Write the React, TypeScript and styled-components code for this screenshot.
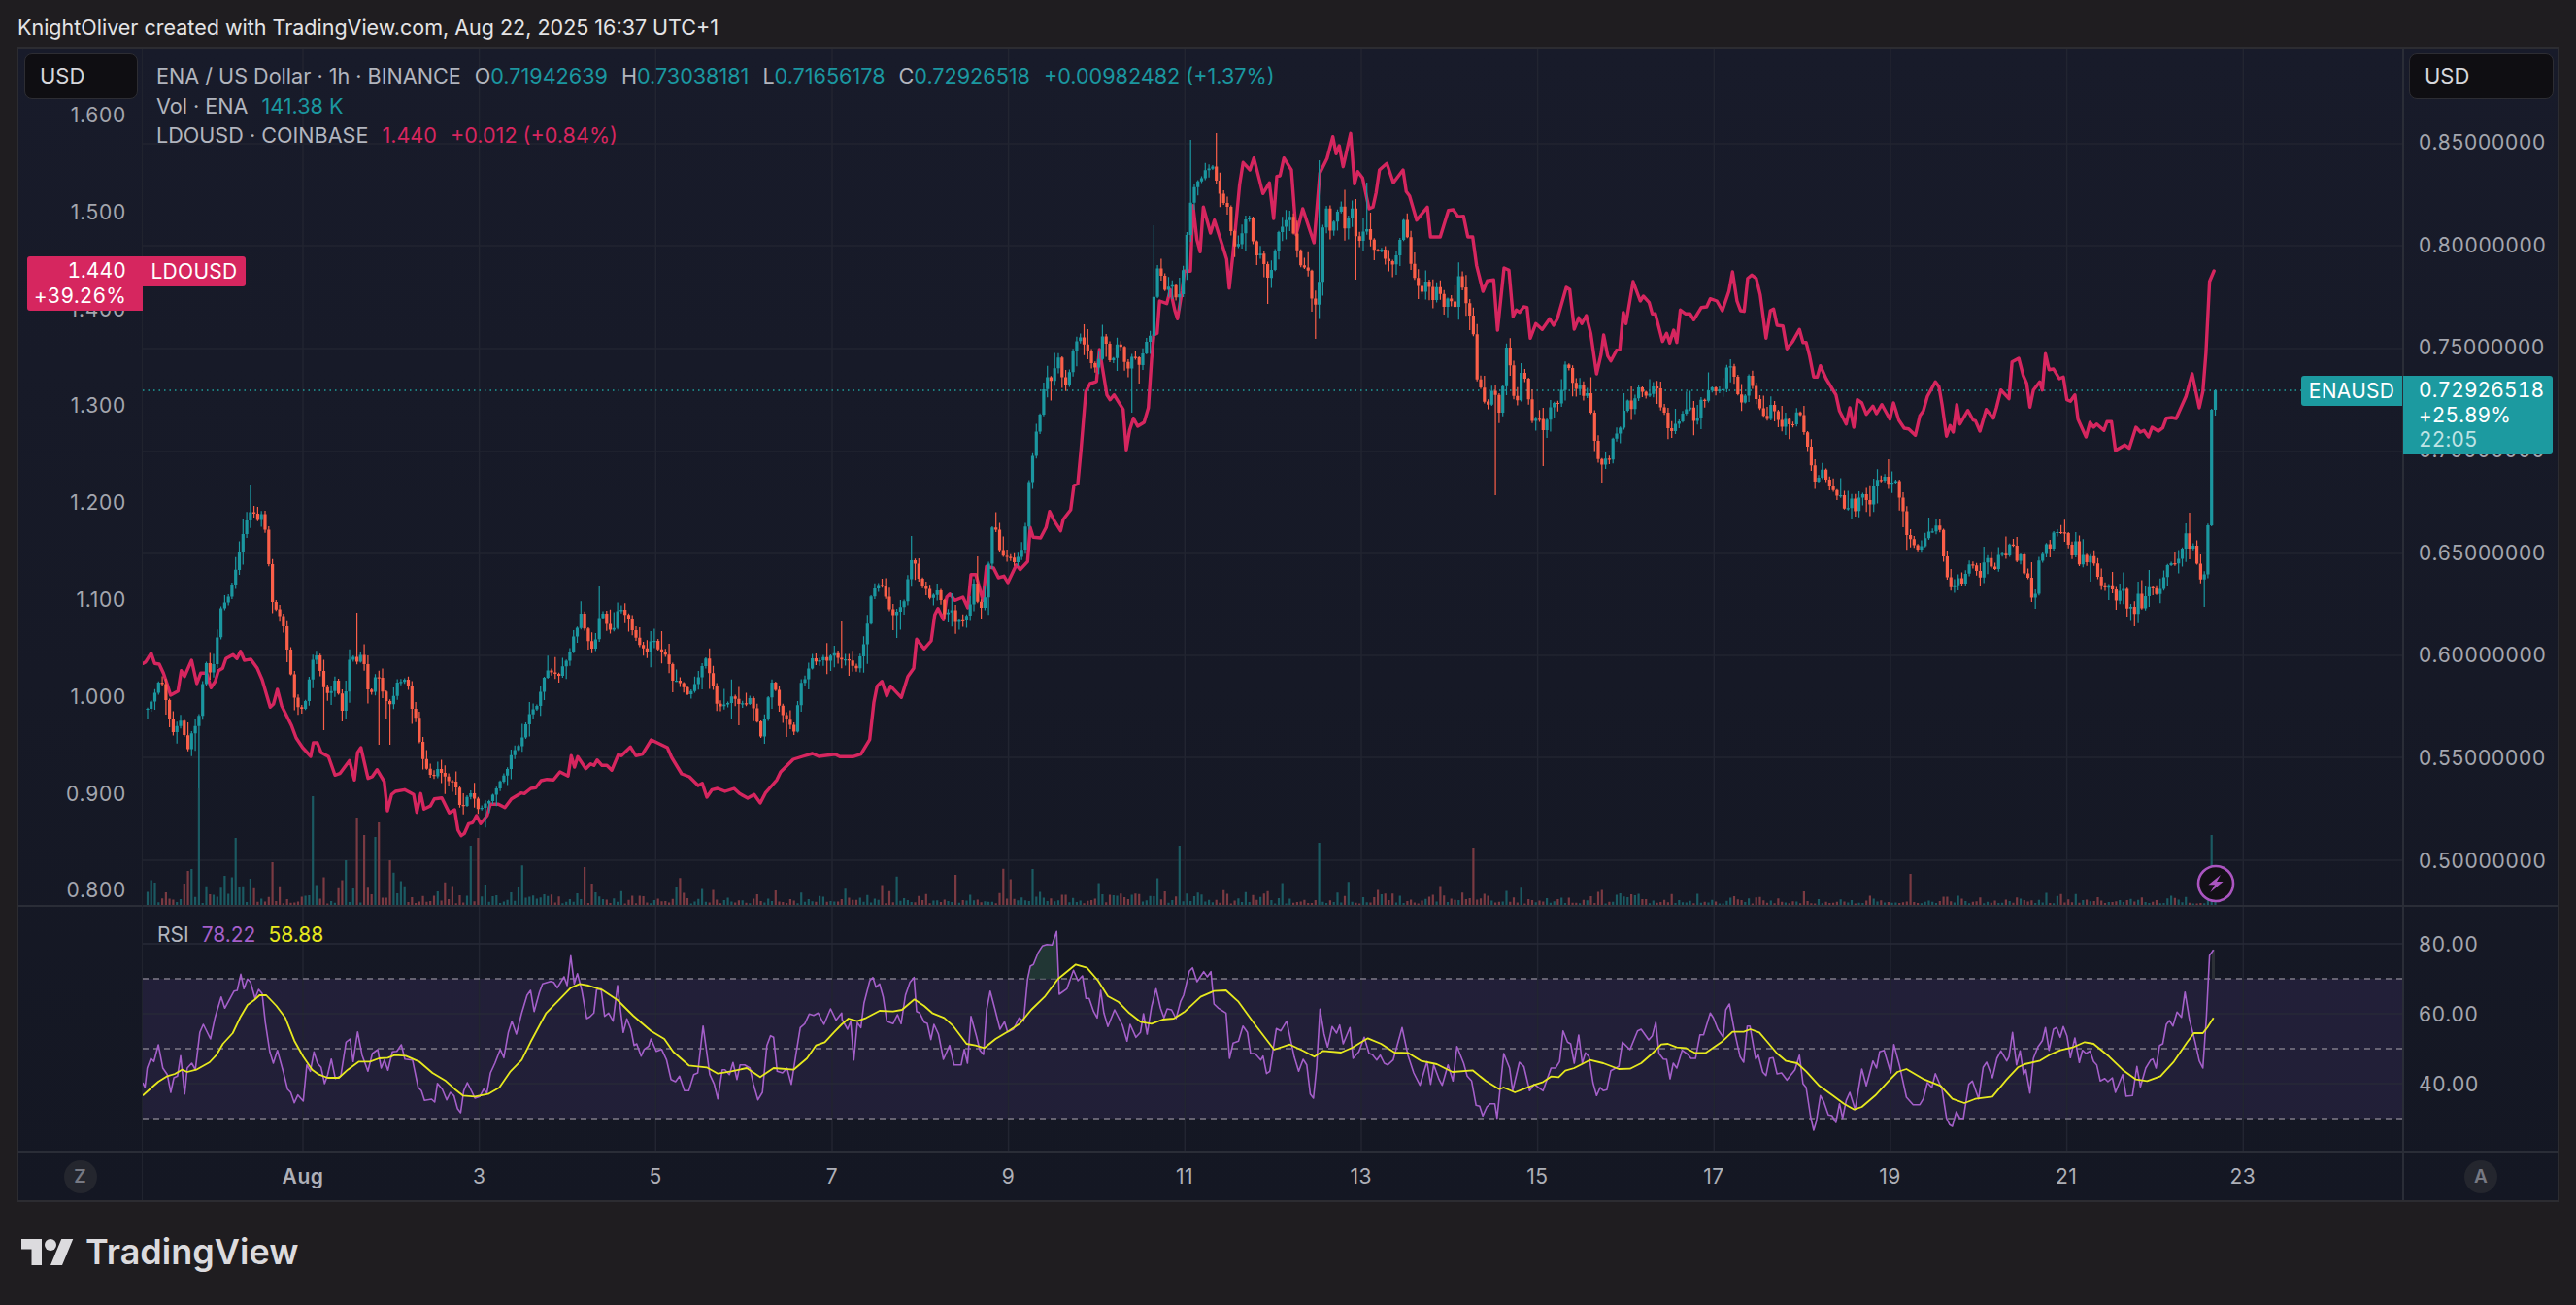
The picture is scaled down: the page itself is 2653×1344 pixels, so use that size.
import styled, { createGlobalStyle } from "styled-components";

const GlobalStyle = createGlobalStyle`
  html, body {
    margin: 0;
    padding: 0;
    background: #1f1d20;
  }
  * {
    box-sizing: border-box;
  }
`;

const FONT = `"Inter", "Liberation Sans", sans-serif`;
const TEAL = "#1b97a0";
const RED = "#fb5f49";
const PINK = "#d6265f";

type Pt = [number, number];

// readings taken from the chart, flat x,y lists with their own origin and scale
const scan = (ox: number, oy: number, sx: number, flat: number[]): Pt[] => {
  const out: Pt[] = [];
  for (let i = 0; i < flat.length; i += 2) {
    out.push([ox + flat[i] / sx, oy + flat[i + 1] / 3]);
  }
  return out;
};

const merge = (...parts: Pt[][]): Pt[] => {
  const out: Pt[] = [];
  parts.flat().forEach((p) => {
    if (!out.length || p[0] > out[out.length - 1][0]) out.push(p);
  });
  return out;
};

const lineAt = (pts: Pt[], x: number) => {
  if (x <= pts[0][0]) return pts[0][1];
  for (let i = 1; i < pts.length; i++) {
    if (x <= pts[i][0]) {
      const t = (x - pts[i - 1][0]) / (pts[i][0] - pts[i - 1][0]);
      return pts[i - 1][1] + t * (pts[i][1] - pts[i - 1][1]);
    }
  }
  return pts[pts.length - 1][1];
};

const toPath = (pts: Pt[]) =>
  pts.map((p, i) => `${i ? "L" : "M"}${p[0].toFixed(1)} ${p[1].toFixed(1)}`).join("");

const enaTrace = merge(
  scan(140, 480, 3, [
    28,750,40,750,52,710,62,690,74,670,85,680,97,745,107,810,119,820,130,805,143,770,155,870,165,870,176,810,187,810,199,740,212,610,220,610,232,650,245,590,257,490,266,400,278,420,290,400,302,330,314,310,323,230,335,190,347,170,358,140,371,170,380,170,392,140,404,230,416,350,425,465,437,440,449,465,461,520,473,610,482,675,494,730,506,750,518,760,530,700,540,625,552,590,562,590,574,650,584,690,596,720,608,665,620,670,632,745,640,750,653,660,665,560,677,630,688,600,698,560,710,650,722,720,733,690,743,635,755,680,767,710,779,740,791,740,800,680,812,670,824,650,836,650,848,720,868,800,880,870,892,920,902,955,914,950,926,960,937,935,949,940,959,970,970,980,983,970,995,1020,1006,1070,1016,1040,1028,1010,1040,1015,1052,1055,1060,1070,1072,1050,1085,1045,1096,1020,1109,995,1117,985,1130,960,1142,950,1153,920,1167,875,1176,870,1188,865,1198,825,1212,785,1221,745,1232,745,1244,735,1255,685,1267,635,1277,640,1288,640,1300,642,1312,635,1325,603,1333,612,1346,540,1358,510,1369,478,1379,455,1390,525,1402,565,1414,553,1428,490,1438,445,1448,485,1460,505,1472,510,1483,505,1492,400,
  ]),
  scan(630, 280, 3, [
    12,1100,24,1040,34,1030,46,1070,56,1070,68,1120,80,1130,92,1170,103,1175,115,1155,125,1135,137,1150,148,1165,160,1172,172,1185,182,1240,194,1272,206,1270,218,1265,230,1290,238,1310,250,1290,262,1270,274,1240,284,1180,295,1190,307,1265,319,1310,331,1350,341,1350,353,1325,365,1320,377,1300,388,1325,398,1340,409,1325,421,1330,431,1325,442,1350,455,1420,466,1440,478,1330,490,1280,500,1260,512,1320,523,1380,535,1370,547,1390,557,1410,568,1410,581,1280,592,1260,602,1240,613,1210,625,1195,637,1200,650,1195,659,1205,670,1205,682,1185,694,1185,706,1185,716,1190,728,1200,741,1185,751,1250,760,1190,772,1175,784,1130,796,1040,808,975,818,975,829,978,842,980,853,1030,866,1065,874,1060,886,1045,898,1045,910,980,920,910,931,880,943,925,955,960,967,975,977,985,989,1015,1000,990,1012,980,1024,1040,1033,1060,1045,1045,1057,1060,1069,1090,1078,1082,1090,1060,1102,1080,1114,960,1126,990,1136,1040,1147,1050,1159,960,1171,810,1183,780,1192,830,1204,880,1216,890,1228,890,1237,890,1249,890,1261,860,1273,850,1285,700,1294,600,1306,525,1318,470,1330,385,1342,340,1351,330,1363,330,1375,250,1387,300,1396,370,1408,340,1420,280,1432,220,1444,210,1453,200,1465,235,1477,255,1489,295,
  ]),
  scan(1100, 120, 3, [
    8,775,20,695,32,690,42,665,55,690,67,735,79,775,90,800,100,690,112,670,124,755,136,770,146,710,157,695,170,745,180,785,193,755,203,735,214,765,226,765,238,695,250,710,260,610,272,480,283,455,295,545,305,520,316,515,328,545,340,570,352,495,362,435,373,300,385,210,397,205,408,215,420,160,430,165,443,150,454,185,464,240,475,255,487,270,499,310,512,420,522,385,532,385,544,330,556,300,568,365,578,425,590,430,602,440,613,480,622,510,634,440,646,380,658,340,670,340,682,305,692,340,704,405,716,445,726,470,737,450,749,525,760,600,772,570,782,400,794,240,806,380,818,320,830,310,842,250,851,340,863,330,874,260,886,350,896,410,907,365,919,335,932,365,944,400,952,420,964,405,976,430,988,460,998,450,1010,445,1022,410,1034,315,1045,360,1056,430,1067,480,1079,510,1090,550,1100,530,1112,490,1124,575,1136,515,1147,530,1157,600,1168,590,1180,545,1193,620,1204,490,1213,510,1225,555,1238,600,1250,640,1262,800,1270,810,1283,860,1294,900,1306,840,1316,835,1328,930,1340,890,1351,695,1364,760,1373,850,1385,905,1397,790,1408,805,1421,850,1430,950,1441,930,1453,925,1465,975,1474,950,1486,930,1500,850,
  ]),
  scan(1580, 240, 2.178, [
    44,530,52,520,60,510,68,400,76,420,84,440,92,500,100,430,108,520,116,500,124,500,134,640,142,700,150,715,158,690,166,715,175,650,183,630,191,620,200,550,208,520,216,550,224,520,232,490,240,480,248,490,256,500,264,490,272,450,280,530,288,550,296,570,305,620,314,600,322,590,330,570,338,550,347,530,355,570,364,580,372,520,380,520,388,500,396,465,404,490,412,470,422,495,430,430,438,410,446,440,454,480,462,520,470,540,480,450,486,445,495,500,503,520,513,560,520,590,528,540,536,530,545,580,555,590,563,580,571,595,579,590,587,565,595,555,603,610,611,635,619,700,628,780,636,770,644,725,652,745,660,790,668,790,678,825,686,795,694,850,702,860,711,820,718,870,726,835,735,790,743,830,751,845,759,800,767,760,775,775,783,745,791,740,799,810,808,745,817,800,826,845,833,920,842,935,850,960,858,975,866,985,874,955,882,925,892,930,900,900,908,915,915,955,924,1055,933,1085,941,1090,949,1065,957,1090,965,1075,973,1035,981,1020,990,1040,998,1075,1006,1020,1015,1000,1024,1015,1032,1045,1040,1005,1048,990,1056,1005,1064,975,1073,950,1081,1020,1090,990,1098,1050,1106,1060,1114,1120,1122,1145,1131,1010,1139,995,1147,940,1155,1000,1163,935,1171,930,1181,935,1189,920,1197,945,1205,1005,1213,945,1222,1025,1230,990,1238,1015,1246,995,1255,1015,1263,1065,1271,1085,1279,1090,1288,1100,1296,1085,1304,1130,1312,1105,1320,1095,1329,1165,1337,1160,1345,1180,1354,1105,1362,1160,1370,1125,1378,1105,1387,1100,1395,1125,1403,1100,1411,1065,1419,1020,1428,1015,1436,1015,1444,1020,1452,980,1460,915,1469,985,1477,960,1485,1015,1493,1065,1501,1085,1510,968,1519,550,1528,490,
  ])
);

const ldoLine = merge(
  scan(140, 480, 3, [
    22,610,30,605,47,578,58,610,72,612,85,640,95,670,107,708,130,695,140,632,150,650,172,600,188,672,200,640,218,640,232,685,245,665,255,632,268,625,278,595,300,583,312,595,323,572,335,600,355,597,375,625,390,660,415,745,425,735,437,690,450,740,465,770,480,800,495,840,515,870,540,897,548,855,560,855,572,885,595,898,615,955,630,950,660,910,675,970,685,885,695,870,717,965,730,960,745,938,767,975,777,1065,790,1015,802,1005,830,1000,858,1015,868,1070,880,1012,890,1060,910,1050,922,1028,945,1025,968,1072,985,1062,995,1125,1005,1142,1015,1135,1028,1105,1040,1102,1052,1080,1065,1105,1085,1080,1095,1045,1120,1045,1140,1055,1160,1028,1190,1010,1200,1012,1220,996,1235,994,1252,972,1270,968,1290,970,1310,945,1335,958,1345,895,1355,930,1365,898,1390,935,1405,920,1415,925,1425,908,1440,925,1455,925,1470,940,1490,892,1500,895,
  ]),
  scan(630, 280, 3, [58,1468,75,1495,95,1490,122,1446,172,1470,185,1500,216,1551,240,1560,267,1587,280,1580,294,1623,310,1600,327,1596,350,1605,378,1596,395,1612,420,1626,440,1615,459,1641,475,1610,495,1587,510,1570,522,1545,561,1506,590,1497,620,1488,640,1497,690,1490,705,1498,745,1498,770,1490,797,1445,810,1330,820,1280,835,1265,850,1310,862,1280,895,1315,915,1250,933,1225,942,1135,965,1165,987,1140,998,1060,1008,1040,1025,1075,1035,1005,1045,995,1060,1015,1085,1005,1100,1038,1110,935,1125,935,1147,1015,1158,910,1180,915,1195,945,1212,940,1224,960,1250,905,1262,920,1285,895,1293,790,1302,820,1325,822,1342,790,1353,740,1368,770,1387,800,1395,765,1418,735,1428,660,1440,655,1450,550,1465,370,1478,345,1495,340]),
  scan(1100, 120, 3, [
    88,818,97,720,110,800,120,860,130,875,142,860,170,905,180,1030,190,970,202,932,215,957,235,945,248,900,258,750,265,675,275,670,283,570,305,578,316,535,330,600,338,625,352,540,360,478,378,478,386,275,398,380,408,418,418,280,440,360,452,320,490,440,498,530,510,420,530,210,541,142,562,165,574,128,602,238,622,205,635,315,645,185,655,183,667,128,690,165,705,365,725,285,745,345,760,390,778,175,800,130,818,62,828,115,838,90,850,155,873,52,885,208,895,170,910,190,930,285,942,280,952,235,962,165,985,145,1005,205,1035,165,1045,232,1055,245,1077,320,1110,280,1120,372,1150,372,1175,290,1190,288,1205,310,1222,308,1235,372,1250,372,1262,460,1282,540,1295,508,1315,505,1327,660,1347,468,1362,475,1375,618,1385,598,1395,605,1408,588,1418,590,1428,685,1445,640,1465,658,1488,625,1500,645,
  ]),
  scan(1580, 240, 2.178, [
    52,265,72,168,80,175,90,297,100,262,107,280,117,255,127,310,140,435,150,375,156,315,165,380,172,395,185,362,192,360,200,245,206,280,222,150,238,210,245,195,258,215,265,250,272,250,288,335,297,310,304,340,313,300,320,338,328,238,340,250,350,250,358,268,375,230,387,228,395,203,410,210,422,240,437,180,445,120,455,210,463,240,471,242,479,140,488,130,498,140,507,190,520,325,530,240,537,235,545,285,558,287,567,358,580,335,595,298,603,338,610,338,618,380,627,445,635,445,642,410,655,450,677,500,685,550,700,590,708,540,717,600,725,515,735,525,745,560,760,535,768,558,780,530,798,575,806,525,818,578,830,603,840,605,855,625,865,565,873,550,882,505,900,460,908,475,915,530,925,628,933,595,940,615,948,530,955,590,973,548,985,578,990,580,1000,612,1014,545,1030,572,1037,540,1047,485,1065,512,1072,398,1087,387,1097,440,1105,465,1112,538,1120,485,1134,460,1140,485,1147,373,1155,422,1165,420,1178,450,1187,445,1195,515,1203,520,1213,500,1220,575,1238,630,1247,585,1255,600,1262,590,1278,610,1285,583,1295,583,1304,672,1325,655,1335,665,1350,600,1360,615,1368,610,1378,630,1386,600,1400,612,1410,602,1418,572,1430,570,1440,573,1462,505,1476,435,1492,540,1500,490,1507,370,1515,150,1525,117,
  ])
);

const rsiLine = merge(
  scan(147, 960, 2.178, [
    0,465,5,480,10,420,18,390,25,400,35,348,45,420,55,440,63,495,70,450,78,445,85,382,94,500,100,420,110,405,118,425,128,310,136,285,152,330,162,265,176,200,184,235,205,182,212,180,220,130,227,175,235,145,242,155,252,205,260,177,268,190,275,280,285,370,293,405,302,365,315,430,325,485,332,495,340,527,348,503,360,522,368,410,376,430,384,370,392,405,400,418,408,468,415,440,423,392,432,452,444,445,456,340,465,330,472,400,482,308,492,380,505,430,515,375,527,363,535,420,542,395,550,427,560,370,570,368,580,348,588,392,605,395,618,480,625,490,632,520,648,516,655,525,661,467,672,485,682,518,690,495,698,505,706,545,713,558,720,490,728,465,738,492,745,513,756,508,765,485,772,497,780,435,790,405,802,362,810,388,820,310,828,275,838,315,850,250,862,195,870,180,878,245,890,185,897,160,915,152,922,155,930,172,945,138,952,165,960,73,968,160,975,128,985,180,996,267,1003,262,1012,250,1018,178,1028,175,1036,260,1045,250,1055,275,1065,165,1078,310,1086,268,1095,300,1102,350,1108,345,1118,383,1125,362,1135,352,1140,330,1152,368,1164,362,1175,395,1185,455,1195,462,1204,445,1215,490,1225,490,1236,440,1245,435,1257,290,1272,440,1282,470,1290,515,1300,425,1306,425,1316,440,1324,403,1333,455,1340,410,1350,410,1362,420,1370,470,1380,518,1390,495,1400,350,1408,320,1415,325,1423,430,1435,435,1445,420,1455,470,1465,380,1475,295,1485,283,1495,253,1505,257,1515,250,1528,285,1543,237,1555,272,1568,250,
  ]),
  scan(860, 950, 2.178, [
    16,300,28,330,35,305,42,425,50,310,58,325,65,250,78,180,85,170,92,200,100,190,108,230,116,305,130,313,140,285,148,313,158,225,168,185,177,170,183,275,190,280,200,308,207,312,215,362,222,315,232,345,243,423,257,380,267,440,283,440,290,392,297,435,305,290,317,350,325,395,333,408,340,270,348,212,358,265,370,330,380,307,387,338,400,330,413,295,423,305,432,175,438,135,445,130,455,95,465,73,475,68,487,70,497,28,503,222,520,205,535,148,545,180,555,165,563,235,570,235,580,275,588,295,596,210,603,280,612,322,627,270,645,318,655,367,662,315,675,355,685,340,692,282,700,345,710,260,720,205,730,265,738,295,745,267,755,270,765,297,775,245,782,225,795,150,802,140,812,183,827,152,835,168,843,152,850,252,860,265,877,280,885,420,893,373,905,367,915,320,925,340,932,405,942,405,955,425,960,413,968,467,975,460,990,328,1000,335,1013,305,1030,415,1040,460,1050,423,1058,440,1066,530,1073,543,1080,450,1088,268,1097,345,1105,385,1115,322,1125,342,1132,317,1140,375,1155,325,1162,420,1175,400,1187,355,1198,405,1205,408,1215,425,1223,410,1232,435,1240,440,1252,425,1272,325,1285,410,1298,465,1312,503,1328,430,1336,500,1343,440,1355,485,1362,503,1375,440,1386,490,1395,383,1410,435,1418,475,1428,490,1438,565,1446,568,1453,598,1462,570,1470,560,1480,560,1485,605,1500,405,1513,450,1520,520,1535,432,1545,445,1558,520,1568,500,
  ]),
  scan(1580, 960, 2.178, [
    20,490,38,420,48,420,57,400,65,305,75,340,82,345,90,405,100,318,108,405,115,373,123,385,132,465,140,505,148,480,155,490,163,487,172,428,190,415,198,340,215,363,232,305,240,300,257,333,265,320,273,278,280,375,290,392,297,393,305,453,312,405,320,420,332,365,345,378,352,390,362,390,372,317,380,317,395,250,402,265,412,300,424,325,430,240,438,222,450,310,462,385,470,402,478,290,484,290,497,392,503,380,513,433,520,443,528,390,536,388,545,438,555,435,567,457,585,425,595,380,603,468,610,480,620,570,627,612,633,585,642,505,650,525,660,565,668,567,677,588,685,530,692,575,700,520,708,495,720,548,735,423,745,475,760,398,768,420,775,370,785,365,800,435,807,347,820,415,835,510,850,533,865,533,873,515,882,465,892,480,900,437,915,487,925,575,932,595,938,600,947,555,955,575,963,575,975,470,983,460,997,515,1007,418,1015,402,1028,450,1038,390,1047,367,1060,398,1065,385,1073,310,1082,410,1090,367,1098,440,1103,425,1112,497,1120,390,1130,355,1140,335,1147,295,1155,365,1165,300,1172,295,1180,325,1187,292,1195,320,1203,388,1213,327,1223,403,1230,365,1238,375,1247,367,1255,400,1262,410,1270,460,1280,452,1287,462,1297,450,1304,495,1320,440,1328,507,1342,505,1352,415,1360,478,1372,420,1383,395,1388,392,1395,420,1403,350,1410,345,1418,285,1425,273,1433,290,1442,247,1452,263,1460,185,1470,270,1482,335,1492,398,1500,420,1508,260,1515,72,1524,55,
  ])
);

const rsiAverage = merge(
  scan(147, 960, 2.178, [
    0,505,20,480,35,462,55,445,72,438,88,425,100,432,120,425,150,402,165,380,180,345,202,312,218,265,235,225,250,210,262,195,277,195,300,228,320,265,340,335,360,385,380,425,395,440,415,450,440,450,460,425,485,400,510,400,530,390,550,388,565,380,590,382,620,400,650,435,680,460,700,485,718,505,745,508,775,500,800,480,825,430,850,395,870,340,905,250,930,215,960,172,980,160,1000,165,1030,178,1065,210,1100,258,1140,305,1170,330,1190,370,1225,412,1265,418,1290,437,1320,430,1355,420,1385,448,1415,420,1460,425,1490,390,1510,350,1530,340,1550,310,1568,285,
  ]),
  scan(860, 950, 2.178, [
    30,297,50,305,70,295,100,273,130,275,150,270,178,238,200,258,218,280,245,295,265,320,295,375,315,380,335,388,360,360,390,335,415,312,440,270,470,230,500,175,540,130,565,140,590,180,612,228,635,245,660,280,685,307,710,313,735,300,760,297,785,275,820,230,850,212,877,210,905,245,940,312,985,393,1020,377,1050,397,1075,415,1095,397,1135,402,1160,387,1195,358,1225,375,1255,402,1285,403,1315,428,1350,438,1385,462,1430,457,1460,490,1490,515,1500,510,1525,525,1568,502,
  ]),
  scan(1580, 960, 2.178, [
    20,463,38,446,55,448,70,428,90,420,125,395,155,405,190,423,215,422,240,405,265,375,285,347,300,345,320,356,340,358,360,373,385,373,420,340,445,308,470,308,485,300,505,310,525,342,545,375,565,398,590,405,610,430,640,475,670,505,695,530,718,548,735,540,765,505,795,460,815,432,835,423,875,455,912,475,938,515,965,528,990,515,1028,508,1060,455,1085,418,1100,408,1135,397,1155,380,1180,365,1210,355,1235,340,1255,345,1290,385,1320,425,1350,455,1375,460,1405,445,1435,400,1465,340,1480,312,1500,312,1510,295,1524,265,
  ])
);

const overbought = scan(860, 950, 2.178, [430,175,438,135,445,130,455,95,465,73,475,68,487,70,497,28,500,175]);

// seeded so the picture is the same on every load
let seed = 20250822;
const rand = () => {
  seed = (seed * 1664525 + 1013904223) % 4294967296;
  return seed / 4294967296;
};

const LAST_X = 2281.5;
const STEP = 3.7825;
const BAR_COUNT = 564;

const longWicks: [number, "top" | "bottom", number][] = [
  [206, "bottom", 812], [392, "bottom", 767], [400, "bottom", 767], [335, "bottom", 752], [259, "top", 500], [256, "top", 503],
  [369, "top", 631], [618, "top", 603], [762, "bottom", 747], [865, "top", 640], [940, "top", 552], [922, "bottom", 657],
  [1005, "top", 573], [1164, "bottom", 425], [1190, "top", 232], [1228, "top", 144], [1251, "top", 137], [1307, "bottom", 313],
  [1353, "bottom", 349], [1360, "top", 165], [1398, "bottom", 288], [1406, "top", 188], [1542, "bottom", 510], [1588, "bottom", 480],
  [1648, "bottom", 497], [1945, "top", 473], [2095, "bottom", 627], [2254, "top", 528], [2269, "bottom", 625],
];

const volumeSpikes: Pt[] = [
  [206, 812], [244, 863], [281, 888], [324, 820], [369, 842], [377, 860], [388, 862], [392, 847], [486, 871], [494, 863],
  [603, 893], [1062, 895], [1216, 871], [1358, 868], [1518, 873], [1968, 900], [2277, 860],
];

const nearest = <T extends { 0: number }>(list: T[], x: number) =>
  list.filter((item) => Math.abs(item[0] - x) <= STEP / 2);

const volumeScale = (x: number) => {
  if (x < 560) return 10;
  if (x < 1300) return 6;
  if (x < 1700) return 5;
  return 3;
};

const buildBars = () => {
  let upBody = "";
  let downBody = "";
  let upWick = "";
  let downWick = "";
  let upVol = "";
  let downVol = "";
  let prev = lineAt(enaTrace, LAST_X - BAR_COUNT * STEP);
  for (let n = BAR_COUNT - 1; n >= 0; n--) {
    const x = LAST_X - n * STEP;
    const jitter = n > 2 ? (rand() - 0.5) * 7 : 0;
    const close = n === 0 ? 402 : lineAt(enaTrace, x) + jitter;
    const open = prev;
    prev = close;
    const up = close <= open;
    const top = Math.min(open, close);
    const bottom = Math.max(open, close);
    const height = Math.max(bottom - top, 1.2);
    const reach = n > 1 ? 20 : 0;
    let high = top - 1 - rand() * rand() * reach;
    let low = bottom + 1 + rand() * rand() * reach;
    if (n === 0) low = 428;
    nearest(longWicks, x).forEach((w) => {
      if (w[1] === "top") high = Math.min(high, w[2]);
      else low = Math.max(low, w[2]);
    });
    const body = `M${(x - 1.6).toFixed(1)} ${top.toFixed(1)}h3.2v${height.toFixed(1)}h-3.2z`;
    const wick = `M${x.toFixed(1)} ${high.toFixed(1)}V${low.toFixed(1)}`;
    if (up) {
      upBody += body;
      upWick += wick;
    } else {
      downBody += body;
      downWick += wick;
    }
    const spike = nearest(volumeSpikes, x)[0];
    const r = Math.max(rand(), 0.002);
    const volH = Math.min(1.5 - Math.log(r) * volumeScale(x), 46);
    const volTop = spike ? spike[1] : 932 - volH;
    const vol = `M${(x - 1.1).toFixed(1)} ${volTop.toFixed(1)}h2.2V932h-2.2z`;
    if (up) upVol += vol;
    else downVol += vol;
  }
  return { upBody, downBody, upWick, downWick, upVol, downVol };
};

const bars = buildBars();

const DAY_XS = [312, 493.6, 675.3, 857, 1038.6, 1220.3, 1402, 1583.6, 1765.3, 1947, 2128.6, 2310.3];
const PRICE_LINES = [148, 253, 359, 465, 570, 675, 780, 886];
const RSI_SOLID = [972, 1044, 1116];
const RSI_DASHED = [1008, 1080, 1152];
const DAYS = ["Aug", "3", "5", "7", "9", "11", "13", "15", "17", "19", "21", "23"];
const LEFT_TICKS = ["1.600", "1.500", "1.400", "1.300", "1.200", "1.100", "1.000", "0.900", "0.800"];
const RIGHT_TICKS = ["0.85000000", "0.80000000", "0.75000000", "0.70000000", "0.65000000", "0.60000000", "0.55000000", "0.50000000"];
const RSI_TICKS = ["80.00", "60.00", "40.00"];

const Page = styled.div`
  width: 2653px;
  height: 1344px;
  background: #1f1d20;
  font-family: ${FONT};
  overflow: hidden;
  display: flex;
  flex-direction: column;
`;

const Credit = styled.div`
  height: 48px;
  padding: 16px 0 0 18px;
  font-size: 21.5px;
  line-height: 24px;
  color: #e4e4e6;
  white-space: nowrap;
`;

const Frame = styled.section`
  position: relative;
  margin-left: 17px;
  width: 2619px;
  height: 1190px;
  border: 2px solid #2c2c31;
  background: linear-gradient(180deg, #181b2a 0%, #161926 55%, #141723 100%);
  display: grid;
  grid-template-columns: 128px 2327px 160px;
  grid-template-rows: 884px 253px 49px;
`;

const Cell = styled.div<{ $line?: boolean; $right?: boolean; $left?: boolean }>`
  position: relative;
  min-width: 0;
  border-bottom: ${(p) => (p.$line ? "2px solid #2a2d37" : "none")};
  border-right: ${(p) => (p.$right ? "1px solid #20232e" : "none")};
  border-left: ${(p) => (p.$left ? "2px solid #2a2d37" : "none")};
`;

const ChartSvg = styled.svg`
  display: block;
  position: absolute;
  top: 0;
  left: 0;
`;

const Scale = styled.div<{ $pad: number; $align: "left" | "right" }>`
  padding-top: ${(p) => p.$pad}px;
  padding-left: ${(p) => (p.$align === "left" ? "15px" : "0")};
  padding-right: ${(p) => (p.$align === "right" ? "16px" : "0")};
  text-align: ${(p) => p.$align};
`;

const Tick = styled.div<{ $h: number }>`
  height: ${(p) => p.$h}px;
  line-height: ${(p) => p.$h}px;
  font-size: 21px;
  letter-spacing: 0.75px;
  color: #a4a6ae;
  white-space: nowrap;
`;

const UnitBox = styled.div<{ $width: number; $left: number }>`
  position: absolute;
  z-index: 3;
  top: 5px;
  left: ${(p) => p.$left}px;
  width: ${(p) => p.$width}px;
  height: 47px;
  padding-left: 15px;
  line-height: 45px;
  font-size: 22px;
  color: #d7d8dc;
  background: #0f0e12;
  border: 1px solid #2d2d33;
  border-radius: 8px;
`;

const Legend = styled.div`
  position: absolute;
  top: 13px;
  left: 14px;
  z-index: 2;
  display: flex;
  flex-direction: column;
  font-size: 21.6px;
  line-height: 30.5px;
  color: #b2b5be;
  white-space: nowrap;
`;

const LegendRow = styled.div`
  display: flex;
  gap: 14px;
`;

const Pair = styled.span`
  display: inline-flex;
`;

const Value = styled.span<{ $color: string }>`
  color: ${(p) => p.$color};
`;

const RsiLegend = styled.div`
  position: absolute;
  top: 14px;
  left: 15px;
  z-index: 2;
  display: flex;
  gap: 13px;
  font-size: 21px;
  line-height: 30px;
  color: #b2b5be;
`;

const TagRow = styled.div<{ $left: number; $top: number }>`
  position: absolute;
  z-index: 4;
  left: ${(p) => p.$left}px;
  top: ${(p) => p.$top}px;
  display: flex;
  align-items: flex-start;
  gap: ${(p) => (p.$left > 1000 ? 1 : 0)}px;
  font-size: 21px;
  font-variant-numeric: tabular-nums;
  color: #ffffff;
`;

const TagName = styled.div<{ $color: string; $width: number; $radius: string }>`
  width: ${(p) => p.$width}px;
  height: 31px;
  line-height: 31px;
  text-align: center;
  letter-spacing: 0.3px;
  background: ${(p) => p.$color};
  border-radius: ${(p) => p.$radius};
`;

const TagValue = styled.div<{ $color: string; $width: number; $height: number; $radius: string; $align: "left" | "right" }>`
  width: ${(p) => p.$width}px;
  height: ${(p) => p.$height}px;
  padding: 2px ${(p) => (p.$align === "right" ? "17px" : "0")} 0 ${(p) => (p.$align === "left" ? "16px" : "0")};
  text-align: ${(p) => p.$align};
  background: ${(p) => p.$color};
  border-radius: ${(p) => p.$radius};
  line-height: 25.5px;
  letter-spacing: 0.1px;
  white-space: nowrap;
`;

const Countdown = styled.div`
  color: #bfe3e5;
`;

const CornerCell = styled(Cell)`
  display: flex;
  align-items: center;
  justify-content: center;
`;

const RoundKey = styled.div`
  width: 34px;
  height: 34px;
  border-radius: 50%;
  background: #24262e;
  color: #777983;
  font-size: 19px;
  font-weight: 600;
  line-height: 34px;
  text-align: center;
`;

const DayRow = styled.div`
  display: flex;
  padding-left: 74.2px;
  height: 100%;
  align-items: center;
`;

const Day = styled.div<{ $bold: boolean }>`
  flex: 0 0 181.64px;
  text-align: center;
  font-size: 21px;
  letter-spacing: 0.5px;
  font-weight: ${(p) => (p.$bold ? 600 : 400)};
  color: #aeb0b8;
`;

const Brand = styled.div`
  display: flex;
  align-items: center;
  gap: 12px;
  padding: 31px 0 0 22px;
  color: #dcdbde;
`;

const BrandName = styled.span`
  font-size: 36px;
  line-height: 40px;
  font-weight: 600;
`;

function VerticalGrid({ y1, y2 }: { y1: number; y2: number }) {
  return (
    <g stroke="#222531" strokeWidth="1.5">
      {DAY_XS.map((x) => (
        <line key={x} x1={x} x2={x} y1={y1} y2={y2} />
      ))}
    </g>
  );
}

function PricePane() {
  return (
    <ChartSvg width="2327" height="882" viewBox="147 50 2327 882">
      <VerticalGrid y1={50} y2={932} />
      <g stroke="#222531" strokeWidth="1.5">
        {PRICE_LINES.map((y) => (
          <line key={y} x1={147} x2={2474} y1={y} y2={y} />
        ))}
      </g>
      <path d={bars.upVol} fill="#1b5a62" />
      <path d={bars.downVol} fill="#7a3a42" />
      <line x1={147} x2={2370} y1={402} y2={402} stroke="#1f9f9b" strokeWidth="1.5" strokeDasharray="1.5 4" />
      <path d={toPath(ldoLine)} fill="none" stroke={PINK} strokeWidth="3.4" strokeLinejoin="round" strokeLinecap="round" />
      <path d={bars.upWick} stroke={TEAL} strokeWidth="1.2" fill="none" />
      <path d={bars.downWick} stroke={RED} strokeWidth="1.2" fill="none" />
      <path d={bars.upBody} fill={TEAL} />
      <path d={bars.downBody} fill={RED} />
      <g transform="translate(2282 910)">
        <circle r="18" fill="#131016" stroke="#ab55c0" strokeWidth="2.6" />
        <path d="M5 -9L-7.6 1.3H-1L-5.7 9L7.6 -2H1Z" fill="#ab55c0" />
      </g>
    </ChartSvg>
  );
}

function RsiPane() {
  return (
    <ChartSvg width="2327" height="251" viewBox="147 934 2327 251">
      <rect x="147" y="1008" width="2327" height="144" fill="#7e57c2" opacity="0.13" />
      <VerticalGrid y1={934} y2={1185} />
      <g stroke="#272a37" strokeWidth="1.5">
        {RSI_SOLID.map((y) => (
          <line key={y} x1={147} x2={2474} y1={y} y2={y} />
        ))}
      </g>
      <g stroke="#7f7b88" strokeWidth="1.3" strokeDasharray="6 5">
        {RSI_DASHED.map((y) => (
          <line key={y} x1={147} x2={2474} y1={y} y2={y} />
        ))}
      </g>
      <path d={`${toPath(overbought)}Z`} fill="#25403a" opacity="0.75" />
      <rect x="2278" y="978" width="3" height="30" fill="#2c3036" />
      <path d={toPath(rsiLine)} fill="none" stroke="#a45fc9" strokeWidth="1.6" strokeLinejoin="round" />
      <path d={toPath(rsiAverage)} fill="none" stroke="#e7e91e" strokeWidth="1.8" strokeLinejoin="round" />
    </ChartSvg>
  );
}

function TvMark() {
  return (
    <svg width="54" height="27" viewBox="0 4 36 18" fill="#dcdbde">
      <path d="M14 22H7V11H0V4h14v18zM28 22h-8l7.5-18h8L28 22z" />
      <circle cx="20" cy="8" r="4" />
    </svg>
  );
}

export default function App() {
  return (
    <Page>
      <GlobalStyle />
      <Credit>KnightOliver created with TradingView.com, Aug 22, 2025 16:37 UTC+1</Credit>
      <Frame>
        <Cell $line $right>
          <UnitBox $left={6} $width={117}>USD</UnitBox>
          <Scale $pad={19} $align="right">
            {LEFT_TICKS.map((t) => (
              <Tick key={t} $h={99.8}>{t}</Tick>
            ))}
          </Scale>
        </Cell>
        <Cell $line>
          <PricePane />
          <Legend>
            <LegendRow>
              <span>ENA / US Dollar · 1h · BINANCE</span>
              <Pair>O<Value $color={TEAL}>0.71942639</Value></Pair>
              <Pair>H<Value $color={TEAL}>0.73038181</Value></Pair>
              <Pair>L<Value $color={TEAL}>0.71656178</Value></Pair>
              <Pair>C<Value $color={TEAL}>0.72926518</Value></Pair>
              <Value $color={TEAL}>+0.00982482 (+1.37%)</Value>
            </LegendRow>
            <LegendRow>
              <span>Vol · ENA</span>
              <Value $color={TEAL}>141.38 K</Value>
            </LegendRow>
            <LegendRow>
              <span>LDOUSD · COINBASE</span>
              <Value $color={PINK}>1.440</Value>
              <Value $color={PINK}>+0.012 (+0.84%)</Value>
            </LegendRow>
          </Legend>
        </Cell>
        <Cell $line $left>
          <UnitBox $left={5} $width={149}>USD</UnitBox>
          <Scale $pad={44} $align="left">
            {RIGHT_TICKS.map((t) => (
              <Tick key={t} $h={105.7}>{t}</Tick>
            ))}
          </Scale>
        </Cell>

        <Cell $line $right />
        <Cell $line>
          <RsiPane />
          <RsiLegend>
            <span>RSI</span>
            <Value $color="#a45fc9">78.22</Value>
            <Value $color="#e7e91e">58.88</Value>
          </RsiLegend>
        </Cell>
        <Cell $line $left>
          <Scale $pad={3} $align="left">
            {RSI_TICKS.map((t) => (
              <Tick key={t} $h={72}>{t}</Tick>
            ))}
          </Scale>
        </Cell>

        <CornerCell $right>
          <RoundKey>Z</RoundKey>
        </CornerCell>
        <Cell>
          <DayRow>
            {DAYS.map((d) => (
              <Day key={d} $bold={d === "Aug"}>{d}</Day>
            ))}
          </DayRow>
        </Cell>
        <CornerCell $left>
          <RoundKey>A</RoundKey>
        </CornerCell>

        <TagRow $left={9} $top={214}>
          <TagValue $color={PINK} $width={119} $height={56} $radius="3px 0 0 3px" $align="right">
            1.440
            <br />
            +39.26%
          </TagValue>
          <TagName $color={PINK} $width={106} $radius="0 3px 3px 0">LDOUSD</TagName>
        </TagRow>
        <TagRow $left={2351} $top={337}>
          <TagName $color="#1c9aa0" $width={104} $radius="3px 0 0 3px">ENAUSD</TagName>
          <TagValue $color="#1c9aa0" $width={154} $height={81} $radius="0 3px 3px 0" $align="left">
            0.72926518
            <br />
            +25.89%
            <Countdown>22:05</Countdown>
          </TagValue>
        </TagRow>
      </Frame>
      <Brand>
        <TvMark />
        <BrandName>TradingView</BrandName>
      </Brand>
    </Page>
  );
}
